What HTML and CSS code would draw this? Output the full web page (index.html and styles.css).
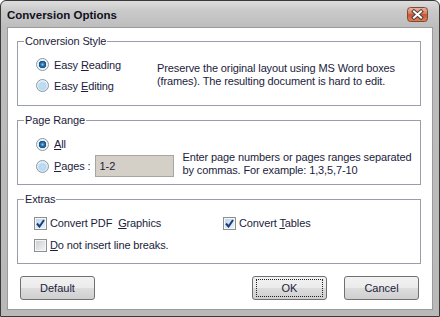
FILE: index.html
```html
<!DOCTYPE html>
<html lang="en">
<head>
  <meta charset="UTF-8" />
  <title>Conversion Options</title>
  <link rel="stylesheet" href="styles.css">
</head>
<body>
  <div class="window">
    <div class="titlebar">
      <span class="title">Conversion Options</span>
      <button class="close" title="Close">
        <svg width="21" height="15" viewBox="0 0 21 15">
          <defs>
            <linearGradient id="closeBg" x1="0" y1="0" x2="0" y2="1">
              <stop offset="0" stop-color="#eeb7a2" />
              <stop offset="0.45" stop-color="#d97b5b" />
              <stop offset="0.5" stop-color="#c9572f" />
              <stop offset="1" stop-color="#dd8258" />
            </linearGradient>
          </defs>
          <rect x="0.5" y="0.5" width="20" height="14" rx="3" fill="url(#closeBg)" stroke="#7d4a37" />
          <path d="M7 4.5 L14 10.5 M14 4.5 L7 10.5" stroke="#4b4040" stroke-width="4" stroke-linecap="square" />
          <path d="M7 4.5 L14 10.5 M14 4.5 L7 10.5" stroke="#ffffff" stroke-width="2" stroke-linecap="square" />
        </svg>
      </button>
    </div>

    <div class="client">
      <fieldset class="group">
        <legend>Conversion Style</legend>
        <div class="style-body">
          <div class="choices">
            <label class="option"><span class="radio checked"></span><span>Easy <u>R</u>eading</span></label>
            <label class="option"><span class="radio"></span><span>Easy <u>E</u>diting</span></label>
          </div>
          <p class="note">Preserve the original layout using MS Word boxes<br>(frames). The resulting document is hard to edit.</p>
        </div>
      </fieldset>

      <fieldset class="group">
        <legend>Page Range</legend>
        <div class="range-body">
          <label class="option"><span class="radio checked"></span><span><u>A</u>ll</span></label>
          <div class="range-pages">
            <label class="option"><span class="radio"></span><span><u>P</u>ages :</span></label>
            <input class="pages-input" type="text" value="1-2" />
            <p class="note hint">Enter page numbers or pages ranges separated<br>by commas. For example: 1,3,5,7-10</p>
          </div>
        </div>
      </fieldset>

      <fieldset class="group">
        <legend>Extras</legend>
        <div class="extras-body">
          <label class="option"><span class="check checked"><svg width="9" height="9" viewBox="0 0 9 9"><path d="M1 4.5 L3.5 7.5 L8 1" fill="none" stroke="#1c3a7a" stroke-width="2" /></svg></span><span>Convert PDF&nbsp; <u>G</u>raphics</span></label>
          <label class="option"><span class="check checked"><svg width="9" height="9" viewBox="0 0 9 9"><path d="M1 4.5 L3.5 7.5 L8 1" fill="none" stroke="#1c3a7a" stroke-width="2" /></svg></span><span>Convert <u>T</u>ables</span></label>
          <label class="option"><span class="check"></span><span><u>D</u>o not insert line breaks.</span></label>
        </div>
      </fieldset>

      <div class="buttons">
        <button class="btn btn-default">Default</button>
        <button class="btn btn-ok"><span class="focus">OK</span></button>
        <button class="btn btn-cancel">Cancel</button>
      </div>
    </div>
  </div>
</body>
</html>
```

FILE: styles.css
```css
body { margin: 0; background: #ffffff; font-family: "Liberation Sans", Arial, sans-serif; font-size: 11px; letter-spacing: -0.12px; color: #1c1c3c; }

.window { width: 440px; height: 317px; box-sizing: border-box; border: 1px solid #3a3a3a; border-radius: 6px 6px 0 0; background: linear-gradient(to bottom, #dedede 0, #c9c9c9 10px, #bdbdbd 27px, #b9b9b9 100%); display: flex; flex-direction: column; }

.titlebar { height: 27px; display: flex; align-items: center; justify-content: space-between; padding-left: 6px; }
.title { font-weight: bold; font-size: 11.5px; letter-spacing: 0; color: #101020; }
.close { align-self: flex-start; margin: 6px 11px 0 0; padding: 0; border: 0; background: none; width: 21px; height: 15px; display: block; }
.close svg { display: block; }

.client { flex: 1; margin: 0 7px 7px 7px; background: #ffffff; box-shadow: 0 0 0 1px #9a9a9a; padding: 7px 11px 0 9px; display: flex; flex-direction: column; gap: 8px; }

.group { margin: 0; padding: 0; border: 1px solid #9a9ea8; min-width: 0; }
.group legend { margin-left: 6px; padding: 0 1px; line-height: 13px; }

.option { display: flex; align-items: center; height: 20px; white-space: nowrap; }
.option u { text-underline-offset: 1px; }

.radio { width: 13px; height: 13px; box-sizing: border-box; border-radius: 50%; border: 1px solid #8a97a4; margin-right: 5px; flex: none; background: radial-gradient(circle at 50% 55%, #c4e0f4 0, #b6d7ee 3px, #e9f3fa 5.5px); }
.radio.checked { background: radial-gradient(circle at 50% 50%, #8ad0f4 0, #2f82c0 1.5px, #124b7b 3.5px, #e6edf3 4px, #f4f7fa 5.5px); }

.check { width: 13px; height: 13px; box-sizing: border-box; border: 1px solid #8e8f8f; box-shadow: inset 0 0 0 1px #f6f6f6; margin-right: 3px; flex: none; display: flex; align-items: center; justify-content: center; background: linear-gradient(135deg, #c9cccf, #f6f6f6); }
.check.checked { background: linear-gradient(135deg, #b9d5ec, #eef5fb); }
.check svg { display: block; }

.note { margin: 0; line-height: 13px; white-space: nowrap; }

.style-body { display: flex; align-items: center; padding: 6px 0 9px 18px; }
.choices { width: 121px; display: flex; flex-direction: column; }
.choices .option { height: 21px; }

.range-body { padding: 7px 0 7px 18px; display: flex; flex-direction: column; gap: 1px; }
.range-pages { display: flex; align-items: center; height: 22px; }
.pages-input { width: 79px; height: 22px; box-sizing: border-box; margin: 0 0 0 5px; padding: 0 3px; border: 1px solid #a5a5a5; background: #d4d0c8; font: inherit; color: #1c1c3c; }
.hint { margin: -5px 0 0 8px; }

.extras-body { padding: 7px 0 8px 16px; display: grid; grid-template-columns: 189px auto; row-gap: 2px; }

.buttons { display: flex; margin-top: 4px; padding: 0 2px 0 3px; }
.btn { width: 75px; height: 24px; padding: 0; box-sizing: border-box; border: 1px solid #707070; border-radius: 3px; background: linear-gradient(to bottom, #f2f2f2 0, #ebebeb 50%, #dddddd 50%, #cfcfcf 100%); font: inherit; color: #1c1c3c; }
.btn-ok { margin-left: auto; }
.btn-cancel { margin-left: 17px; }
.focus { display: flex; align-items: center; justify-content: center; height: 16px; margin: 0 3px; border: 1px dotted #222222; }
```
